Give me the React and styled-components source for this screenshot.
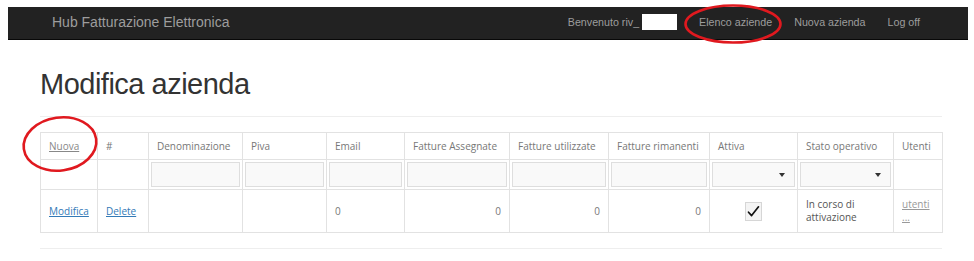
import React from "react";
import styled, { createGlobalStyle } from "styled-components";

const Global = createGlobalStyle`
  html, body { margin: 0; padding: 0; background: #fff; }
  body { font-family: "Open Sans", "Liberation Sans", sans-serif; }
`;

const Page = styled.div`
  position: relative;
  width: 974px;
  height: 261px;
  padding: 7px 0 0 8px;
  box-sizing: border-box;
  overflow: hidden;
`;

const Navbar = styled.nav`
  width: 960px;
  height: 33px;
  background: #222;
  border-bottom: 1px solid #080808;
  box-sizing: border-box;
  display: flex;
  align-items: center;
  padding: 0 48px 2px 44px;
  font-family: "Liberation Sans", Arial, sans-serif;
  color: #9d9d9d;
`;

const Brand = styled.span`
  font-size: 14px;
`;

const NavList = styled.div`
  margin-left: auto;
  display: flex;
  align-items: center;
  gap: 22px;
  font-size: 10.7px;
`;

const Welcome = styled.span`
  display: flex;
  align-items: center;
  gap: 3px;
`;

const MaskBox = styled.span`
  display: inline-block;
  width: 35px;
  height: 16px;
  background: #fff;
`;

const NavLink = styled.span`
  color: #9d9d9d;
`;

const Container = styled.main`
  margin-left: 32px;
  width: 902px;
`;

const Title = styled.h2`
  margin: 28px 0 16px;
  font-family: "Liberation Sans", Arial, sans-serif;
  font-weight: 400;
  font-size: 29px;
  letter-spacing: -0.5px;
  line-height: 32px;
  color: #333;
`;

const Rule = styled.hr`
  margin: 0 0 ${(p) => p.$after || 0}px;
  border: 0;
  border-top: 1px solid #eee;
`;

const Table = styled.table`
  width: 902px;
  border-collapse: collapse;
  table-layout: fixed;
  font-size: 10px;
  color: #777;
  margin-bottom: 15px;
`;

const Th = styled.th`
  height: 27px;
  padding: 0 8px;
  text-align: left;
  font-weight: 400;
  border: 1px solid #e2e2e2;
  box-sizing: border-box;
  white-space: nowrap;
  overflow: hidden;
`;

const FilterCell = styled.td`
  height: 29px;
  padding: 2px;
  border: 1px solid #e2e2e2;
  border-top: 0;
  border-bottom: 0;
  box-sizing: border-box;
`;

const FilterBox = styled.div`
  position: relative;
  height: 25px;
  border: 1px solid #dedede;
  background: #f9f9f9;
  box-sizing: border-box;
`;

const Caret = styled.span`
  position: absolute;
  right: 9px;
  top: 10px;
  width: 0;
  height: 0;
  border-left: 3.5px solid transparent;
  border-right: 3.5px solid transparent;
  border-top: 4px solid #333;
`;

const Td = styled.td`
  height: 43px;
  padding: 0 8px;
  border: 1px solid #e2e2e2;
  box-sizing: border-box;
  vertical-align: middle;
  text-align: ${(p) => p.$align || "left"};
  color: ${(p) => p.$color || "#777"};
  line-height: 13px;
`;

const Link = styled.a`
  color: ${(p) => p.$color || "#337ab7"};
  text-decoration: underline;
  cursor: pointer;
`;

const CheckBox = styled.span`
  display: inline-flex;
  align-items: center;
  justify-content: center;
  width: 17px;
  height: 19px;
  border: 1px solid #d6d6d6;
  background: #f4f4f4;
  box-sizing: border-box;
  vertical-align: middle;
`;

const Mark = styled.svg`
  position: absolute;
  overflow: visible;
  pointer-events: none;
`;

const columns = [57, 51, 94, 84, 78, 105, 99, 101, 88, 96, 49];
const headers = [
  "Nuova",
  "#",
  "Denominazione",
  "Piva",
  "Email",
  "Fatture Assegnate",
  "Fatture utilizzate",
  "Fatture rimanenti",
  "Attiva",
  "Stato operativo",
  "Utenti",
];
// filter kind per column: null = empty, "text", "select"
const filters = [null, null, "text", "text", "text", "text", "text", "text", "select", "select", null];

export default function App() {
  return (
    <>
      <Global />
      <Page>
        <Navbar>
          <Brand>Hub Fatturazione Elettronica</Brand>
          <NavList>
            <Welcome>
              Benvenuto riv_
              <MaskBox />
            </Welcome>
            <NavLink>Elenco aziende</NavLink>
            <NavLink>Nuova azienda</NavLink>
            <NavLink>Log off</NavLink>
          </NavList>
        </Navbar>
        <Container>
          <Title>Modifica azienda</Title>
          <Rule $after={15} />
          <Table>
            <colgroup>
              {columns.map((w, i) => (
                <col key={i} style={{ width: w }} />
              ))}
            </colgroup>
            <thead>
              <tr>
                {headers.map((h, i) => (
                  <Th key={h}>
                    {i === 0 ? <Link $color="#888">{h}</Link> : h}
                  </Th>
                ))}
              </tr>
              <tr>
                {filters.map((f, i) => (
                  <FilterCell key={i}>
                    {f && <FilterBox>{f === "select" && <Caret />}</FilterBox>}
                  </FilterCell>
                ))}
              </tr>
            </thead>
            <tbody>
              <tr>
                <Td>
                  <Link>Modifica</Link>
                </Td>
                <Td>
                  <Link>Delete</Link>
                </Td>
                <Td />
                <Td />
                <Td>0</Td>
                <Td $align="right">0</Td>
                <Td $align="right">0</Td>
                <Td $align="right">0</Td>
                <Td $align="center">
                  <CheckBox>
                    <svg width="13" height="13" viewBox="0 0 13 13">
                      <path d="M1.5 7.2 L4.6 10.6 L11.5 1.8" fill="none" stroke="#111" strokeWidth="1.7" strokeLinecap="round" strokeLinejoin="round" />
                    </svg>
                  </CheckBox>
                </Td>
                <Td $color="#555">In corso di attivazione</Td>
                <Td>
                  <Link $color="#999">utenti ...</Link>
                </Td>
              </tr>
            </tbody>
          </Table>
          <Rule />
        </Container>
        <Mark style={{ left: 684, top: 4 }} width="98" height="40" viewBox="0 0 98 40">
          <ellipse cx="49" cy="20" rx="47.5" ry="18.5" fill="none" stroke="#e0191f" strokeWidth="2.6" />
        </Mark>
        <Mark style={{ left: 22, top: 116 }} width="76" height="56" viewBox="0 0 76 56">
          <ellipse cx="38" cy="28" rx="36.5" ry="26.5" fill="none" stroke="#e0191f" strokeWidth="2.6" transform="rotate(-8 38 28)" />
        </Mark>
      </Page>
    </>
  );
}
